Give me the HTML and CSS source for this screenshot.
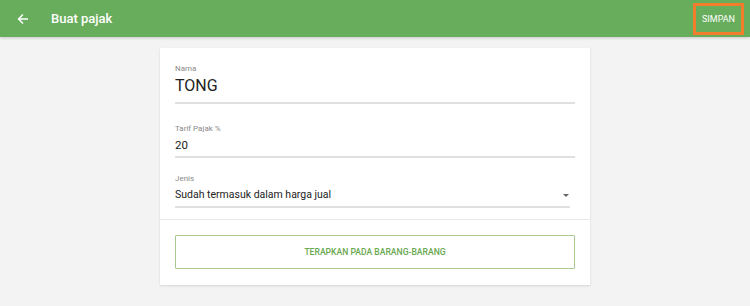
FILE: index.html
```html
<!DOCTYPE html>
<html>
<head>
<meta charset="utf-8">
<link rel="stylesheet" href="styles.css">
</head>
<body>
<header class="topbar">
  <svg class="back" width="12" height="12" viewBox="0 0 12 12"><path d="M11 6H1.8M6 1.5L1.5 6L6 10.5" fill="none" stroke="#fff" stroke-width="1.5"/></svg>
  <div class="title">Buat pajak</div>
  <div class="save">SIMPAN</div>
</header>
<main class="card">
  <div class="fields">
    <div class="field f1">
      <div class="label">Nama</div>
      <div class="value big">TONG</div>
    </div>
    <div class="field f2">
      <div class="label">Tarif Pajak %</div>
      <div class="value">20</div>
    </div>
    <div class="field f3 select">
      <div class="label">Jenis</div>
      <div class="value">Sudah termasuk dalam harga jual</div>
      <span class="caret"></span>
    </div>
  </div>
  <div class="divider"></div>
  <div class="actions">
    <div class="btn">TERAPKAN PADA BARANG-BARANG</div>
  </div>
</main>
</body>
</html>
```
FILE: styles.css
```css
html, body { margin: 0; padding: 0; }
body {
  background: #f3f3f3;
  font-family: Roboto, "Noto Sans", sans-serif;
  width: 750px;
  height: 306px;
  overflow: hidden;
}
.topbar {
  height: 37px;
  background: #67ad5b;
  display: flex;
  align-items: center;
  box-shadow: 0 1px 3px rgba(0,0,0,0.18);
  color: #fff;
}
.back { margin-left: 17px; }
.title {
  margin-left: 22px;
  font-size: 13px;
  font-weight: 500;
}
.save {
  margin-left: auto;
  margin-right: 6px;
  width: 51px;
  height: 32px;
  box-sizing: border-box;
  border: 3px solid #f27d2c;
  font-size: 9px;
  font-weight: 400;
  display: flex;
  align-items: center;
  justify-content: center;
}
.card {
  width: 430px;
  margin: 11px auto 0;
  background: #fff;
  box-shadow: 0 1px 2px rgba(0,0,0,0.12);
}
.fields { padding: 16px 15px 11px; }
.field {
  position: relative;
  border-bottom: 2px solid #e0e0e0;
}
.label {
  font-size: 8px;
  line-height: 10px;
  color: #8a8a8a;
}
.value {
  color: #222;
  font-size: 11px;
  line-height: 18px;
  margin-top: 2px;
  padding-bottom: 2px;
}
.value.big {
  font-size: 16px;
  line-height: 24px;
  margin-top: 0;
  padding-bottom: 4px;
}
.f2 .value { font-size: 11.5px; }
.f2 { margin-top: 20px; }
.f3 { margin-top: 16px; margin-right: 5px; }
.f3 .value { font-size: 10.5px; }
.caret {
  position: absolute;
  right: 1px;
  top: 20px;
  width: 0; height: 0;
  border-left: 3.5px solid transparent;
  border-right: 3.5px solid transparent;
  border-top: 3.5px solid #666;
}
.divider { height: 1px; background: #e8e8e8; }
.actions { padding: 15px 15px 16px; }
.btn {
  height: 34px;
  box-sizing: border-box;
  border: 1.5px solid #a9c98f;
  border-radius: 1px;
  color: #6aa84f;
  font-size: 8.6px;
  font-weight: 500;
  display: flex;
  align-items: center;
  justify-content: center;
}
```
